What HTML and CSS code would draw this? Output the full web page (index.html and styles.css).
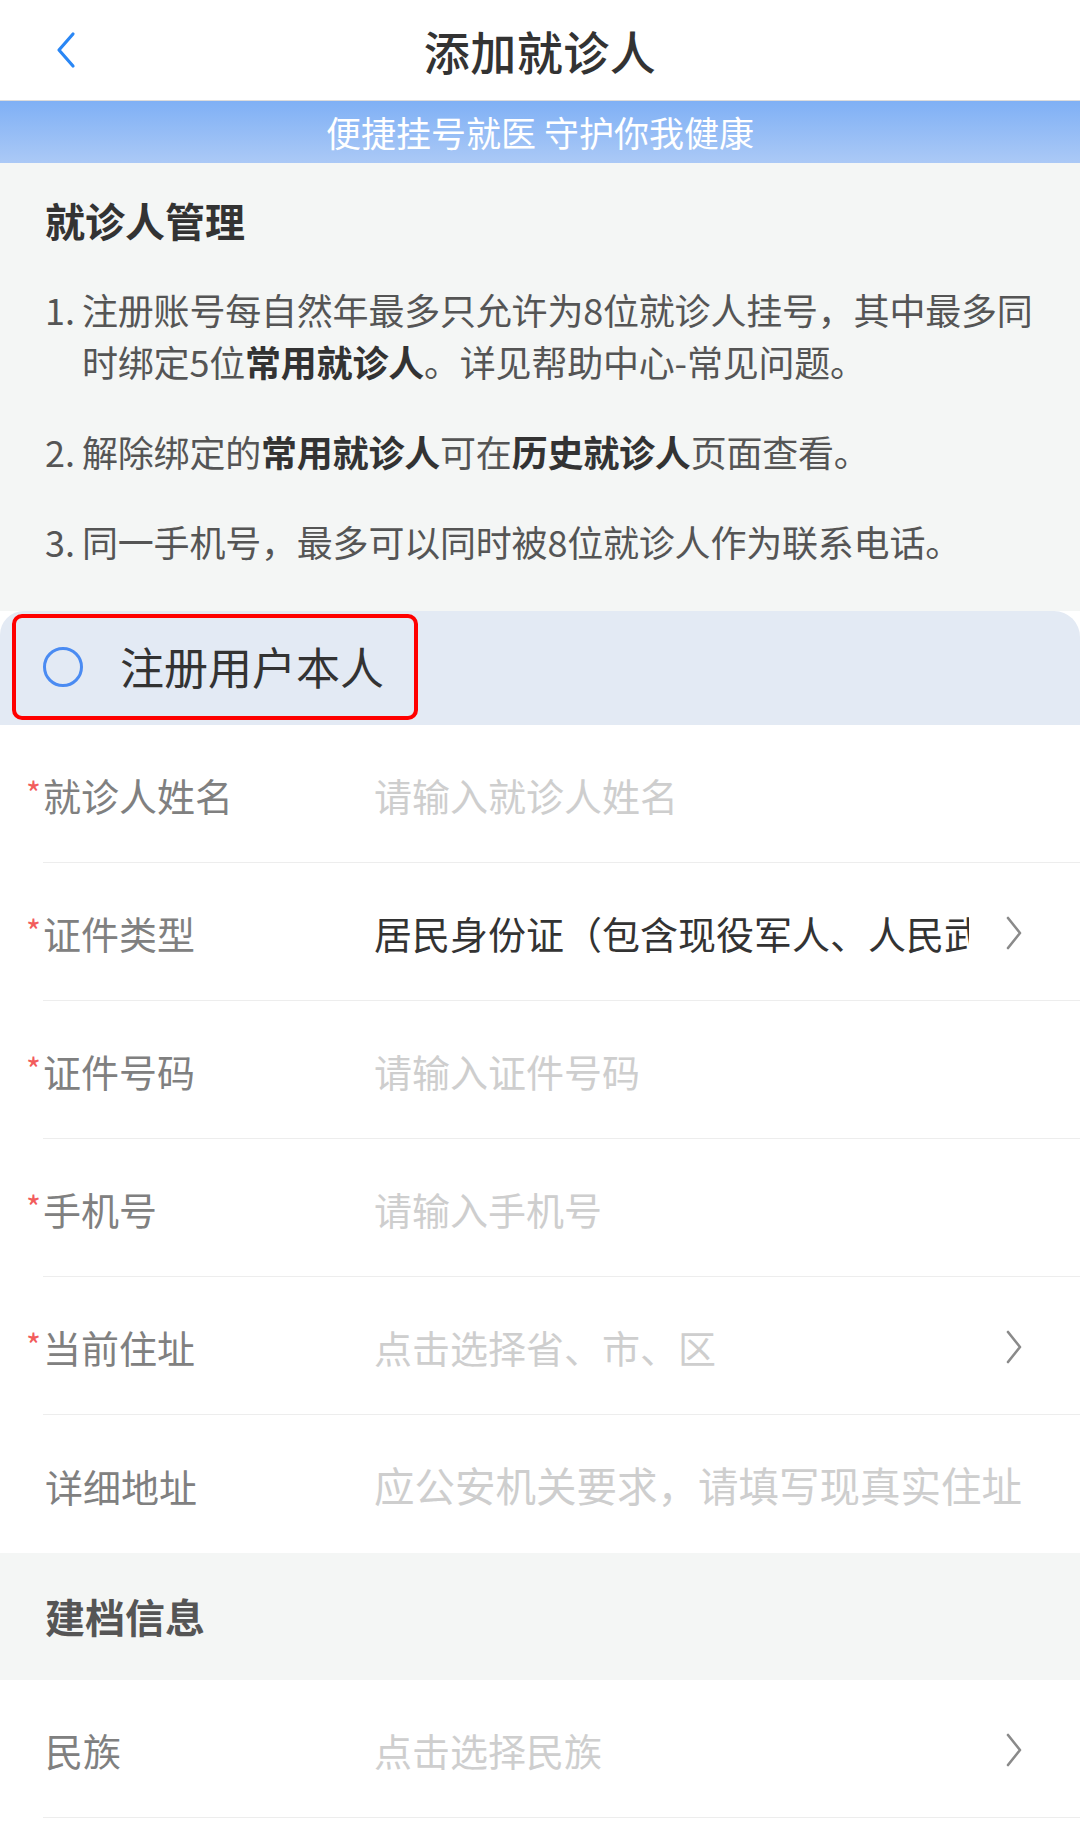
FILE: index.html
```html
<!DOCTYPE html>
<html lang="zh-CN">
<head>
<meta charset="utf-8">
<title>添加就诊人</title>
<link rel="stylesheet" href="styles.css">
</head>
<body>
<div class="page">
  <header class="header">
    <div class="back">
      <svg width="24" height="38" viewBox="0 0 24 38"><path d="M19 3 L5 19 L19 35" fill="none" stroke="#2a87f5" stroke-width="3.2" stroke-linecap="round" stroke-linejoin="round"/></svg>
    </div>
    <h1 class="title">添加就诊人</h1>
    <div></div>
  </header>
  <div class="banner">便捷挂号就医 守护你我健康</div>

  <section class="intro">
    <h2 class="intro-title">就诊人管理</h2>
    <ol class="rules">
      <li><span class="num">1.</span><span class="txt">注册账号每自然年最多只允许为8位就诊人挂号，其中最多同时绑定5位<b>常用就诊人</b>。详见帮助中心-常见问题。</span></li>
      <li><span class="num">2.</span><span class="txt">解除绑定的<b>常用就诊人</b>可在<b>历史就诊人</b>页面查看。</span></li>
      <li><span class="num">3.</span><span class="txt">同一手机号，最多可以同时被8位就诊人作为联系电话。</span></li>
    </ol>
  </section>

  <div class="self-block">
    <div class="self-option">
      <span class="radio"></span>
      <span class="self-text">注册用户本人</span>
    </div>
  </div>

  <div class="form">
    <div class="row"><div class="row-inner">
      <div class="label"><span class="req">*</span>就诊人姓名</div>
      <div class="value placeholder">请输入就诊人姓名</div>
    </div></div>
    <div class="row"><div class="row-inner">
      <div class="label"><span class="req">*</span>证件类型</div>
      <div class="value filled">居民身份证（包含现役军人、人民武警、港澳台居民）</div>
      <svg class="chev" width="22" height="36" viewBox="0 0 22 36"><path d="M5 3 L17 18 L5 33" fill="none" stroke="#8a8a8a" stroke-width="2.6" stroke-linecap="round" stroke-linejoin="round"/></svg>
    </div></div>
    <div class="row"><div class="row-inner">
      <div class="label"><span class="req">*</span>证件号码</div>
      <div class="value placeholder">请输入证件号码</div>
    </div></div>
    <div class="row"><div class="row-inner">
      <div class="label"><span class="req">*</span>手机号</div>
      <div class="value placeholder">请输入手机号</div>
    </div></div>
    <div class="row"><div class="row-inner">
      <div class="label"><span class="req">*</span>当前住址</div>
      <div class="value placeholder">点击选择省、市、区</div>
      <svg class="chev" width="22" height="36" viewBox="0 0 22 36"><path d="M5 3 L17 18 L5 33" fill="none" stroke="#8a8a8a" stroke-width="2.6" stroke-linecap="round" stroke-linejoin="round"/></svg>
    </div></div>
    <div class="row last"><div class="row-inner">
      <div class="label">详细地址</div>
      <div class="value placeholder big">应公安机关要求，请填写现真实住址</div>
    </div></div>
  </div>

  <section class="section-head">建档信息</section>

  <div class="form">
    <div class="row"><div class="row-inner">
      <div class="label">民族</div>
      <div class="value placeholder">点击选择民族</div>
      <svg class="chev" width="22" height="36" viewBox="0 0 22 36"><path d="M5 3 L17 18 L5 33" fill="none" stroke="#8a8a8a" stroke-width="2.6" stroke-linecap="round" stroke-linejoin="round"/></svg>
    </div></div>
  </div>
</div>
</body>
</html>
```

FILE: styles.css
```css
* { box-sizing: border-box; margin: 0; padding: 0; }
html, body { background: #ffffff; }
body {
  width: 1080px;
  height: 1843px;
  overflow: hidden;
  font-family: "Noto Sans CJK SC", "Noto Sans", sans-serif;
  color: #333333;
}
.page { width: 1080px; }

.header {
  height: 101px;
  display: grid;
  grid-template-columns: 1fr auto 1fr;
  align-items: center;
  background: #ffffff;
  border-bottom: 1px solid #dcdcdc;
}
.back { padding-left: 54px; display: flex; align-items: center; }
.title {
  font-size: 46px;
  font-weight: 500;
  color: #333333;
  line-height: 1;
  letter-spacing: 0.5px;
}

.banner {
  height: 62px;
  line-height: 62px;
  text-align: center;
  color: #ffffff;
  font-size: 35px;
  background: linear-gradient(to bottom, #7fb0f5, #abc9f6);
}

.intro {
  background: #f4f6f5;
  padding: 29px 16px 44px 45px;
}
.intro-title {
  font-size: 40px;
  font-weight: 700;
  line-height: 56px;
  color: #333333;
  margin-bottom: 35px;
}
.rules { list-style: none; }
.rules li {
  display: flex;
  font-size: 36px;
  line-height: 52px;
  color: #555555;
  margin-bottom: 38px;
}
.rules li:last-child { margin-bottom: 0; }
.rules .num { width: 37px; flex: none; }
.rules .txt { flex: 1; letter-spacing: -0.2px; }
.rules b { font-weight: 700; color: #333333; }

.self-block {
  background: #e3eaf4;
  height: 114px;
  border-radius: 24px 26px 0 0;
  padding: 3px 0 5px 12px;
}
.self-option {
  width: 406px;
  height: 106px;
  border: 4px solid #ff0000;
  border-radius: 10px;
  display: flex;
  align-items: center;
  padding-left: 27px;
}
.radio {
  width: 40px;
  height: 40px;
  border: 3px solid #4a8bf2;
  border-radius: 50%;
  flex: none;
}
.self-text {
  margin-left: 37px;
  font-size: 44px;
  color: #333333;
  line-height: 1.3;
}

.form { background: #ffffff; }
.row { padding-left: 43px; }
.row-inner {
  height: 138px;
  border-bottom: 1px solid #ededed;
  display: flex;
  align-items: center;
  padding-top: 3px;
}
.row.last .row-inner { border-bottom: none; }
.label {
  width: 331px;
  flex: none;
  font-size: 38px;
  color: #808080;
  line-height: 1.3;
  padding-left: 2px;
  white-space: nowrap;
}
.req {
  display: inline-block;
  width: 17px;
  margin-left: -19px;
  color: #f25c5c;
  font-size: 32px;
  vertical-align: top;
  line-height: 1;
  position: relative;
  top: 6px;
}
.value {
  flex: 1;
  font-size: 38px;
  line-height: 1.4;
  white-space: nowrap;
  overflow: hidden;
  min-width: 0;
}
.value.placeholder { color: #cecece; }
.value.filled { color: #333333; }
.value.big { font-size: 40.5px; overflow: visible; }
.chev { flex: none; margin-left: 34px; margin-right: 55px; }

.section-head {
  background: #f4f6f5;
  height: 127px;
  line-height: 127px;
  padding-left: 45px;
  font-size: 40px;
  font-weight: 700;
  color: #555555;
}
```
